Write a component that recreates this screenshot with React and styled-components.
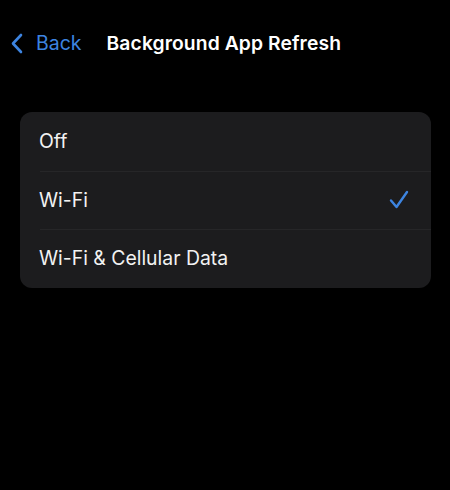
import React from 'react'
import styled, { createGlobalStyle } from 'styled-components'

const GlobalStyle = createGlobalStyle`
  html, body {
    margin: 0;
    padding: 0;
    background: #000;
  }
  body {
    font-family: Inter, "Noto Sans", "Liberation Sans", sans-serif;
    -webkit-font-smoothing: antialiased;
  }
`

const Screen = styled.div`
  width: 450px;
  height: 490px;
  background: #000;
  display: flex;
  flex-direction: column;
  overflow: hidden;
`

const NavBar = styled.div`
  height: 44px;
  margin-top: 21px;
  display: flex;
  align-items: center;
  padding-left: 11px;
`

const BackButton = styled.button`
  display: flex;
  align-items: center;
  gap: 13px;
  background: none;
  border: 0;
  padding: 0;
  color: #3d84e0;
  font-family: inherit;
  font-size: 19.5px;
  font-weight: 400;
  cursor: pointer;
`

const Title = styled.h1`
  margin: 0 0 0 25px;
  color: #fff;
  font-size: 19.3px;
  font-weight: 600;
  letter-spacing: 0.1px;
`

const Group = styled.ul`
  list-style: none;
  margin: 47px 19px 0 20px;
  padding: 0;
  background: #1c1c1e;
  border-radius: 12px;
  overflow: hidden;
`

const Option = styled.li`
  position: relative;
  height: 58.5px;
  display: flex;
  align-items: center;
  justify-content: space-between;
  padding: 0 22px 0 19px;
  color: #f2f2f2;
  font-size: 19.4px;

  & + &::before {
    content: '';
    position: absolute;
    top: 0;
    left: 20px;
    right: 0;
    height: 1px;
    background: #262628;
  }
`

const Check = () => (
  <svg width="20" height="19" viewBox="0 0 20 19" fill="none">
    <path d="M2 10.5 L7.5 17 L18 2" stroke="#3d84e0" strokeWidth="2.4" strokeLinecap="round" strokeLinejoin="round" />
  </svg>
)

const Chevron = () => (
  <svg width="12" height="21" viewBox="0 0 12 21" fill="none">
    <path d="M10 2 L2 10.5 L10 19" stroke="#3d84e0" strokeWidth="2.6" strokeLinecap="round" strokeLinejoin="round" />
  </svg>
)

const options = ['Off', 'Wi-Fi', 'Wi-Fi & Cellular Data']

export default function App() {
  const selected = 'Wi-Fi'
  return (
    <>
      <GlobalStyle />
      <Screen>
        <NavBar>
          <BackButton>
            <Chevron />
            Back
          </BackButton>
          <Title>Background App Refresh</Title>
        </NavBar>
        <Group>
          {options.map(opt => (
            <Option key={opt}>
              {opt}
              {opt === selected && <Check />}
            </Option>
          ))}
        </Group>
      </Screen>
    </>
  )
}
